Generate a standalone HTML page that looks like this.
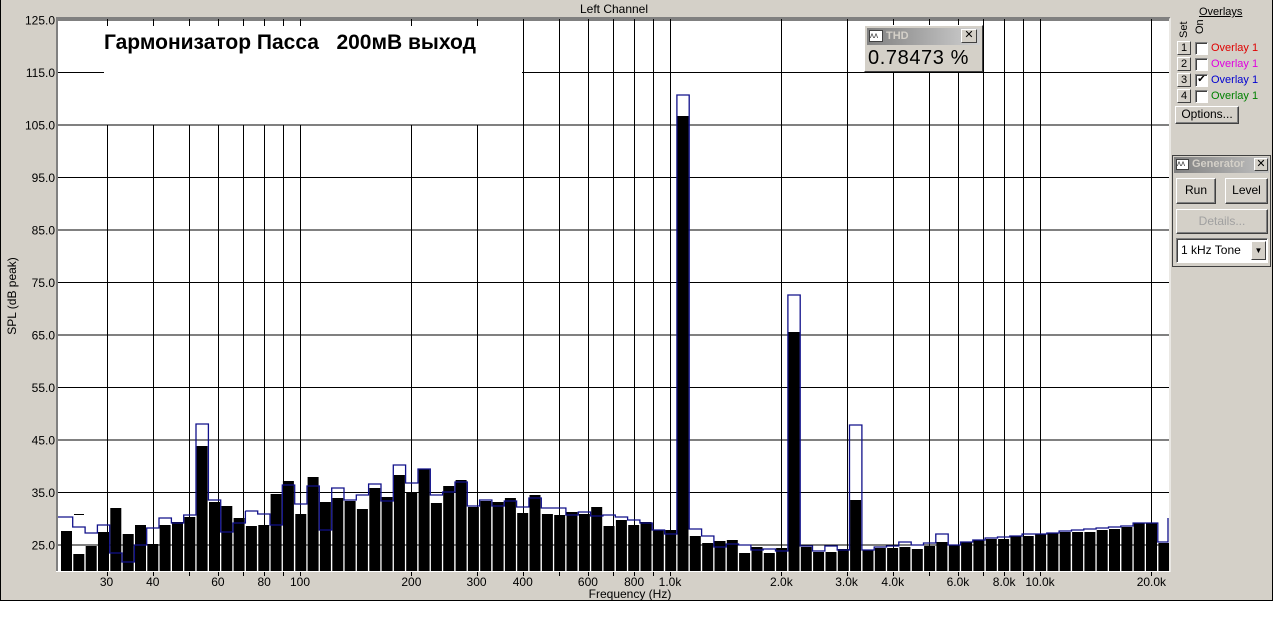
<!DOCTYPE html>
<html><head><meta charset="utf-8">
<style>
*{margin:0;padding:0;box-sizing:border-box}
body{width:1274px;height:637px;background:#fff;position:relative;overflow:hidden;font-family:"Liberation Sans","DejaVu Sans",sans-serif;font-size:11px;color:#000}
#win{position:absolute;left:0;top:0;width:1273px;height:601px;background:#d4d0c8;border-left:1px solid #000;border-bottom:1px solid #000;border-right:1px solid #000}
.abs{position:absolute}
.btn{position:absolute;background:#d4d0c8;border:1px solid;border-color:#fff #404040 #404040 #fff;box-shadow:inset -1px -1px 0 #808080;text-align:center;font-size:12px}
.num{position:absolute;width:14px;height:14px;background:#d4d0c8;border:1px solid;border-color:#fff #404040 #404040 #fff;font-size:11px;text-align:center;line-height:12px}
.cb{position:absolute;width:13px;height:13px;background:#fff;border:1px solid;border-color:#808080 #fff #fff #808080;box-shadow:inset 1px 1px 0 #404040}
.ov{position:absolute;font-size:11px}
</style></head><body>
<div id="win">
<svg id="chart" class="abs" style="left:-1px;top:0" width="1274" height="601" xmlns="http://www.w3.org/2000/svg"></svg>

<div class="abs" style="left:1198px;top:6px;font-size:11px;text-decoration:underline">Overlays</div>
<div class="abs" style="left:1177px;top:38px;transform:rotate(-90deg);transform-origin:left top;font-size:11px">Set</div>
<div class="abs" style="left:1193px;top:34px;transform:rotate(-90deg);transform-origin:left top;font-size:11px">On</div>

<div class="num" style="left:1176px;top:41px">1</div><div class="cb" style="left:1194px;top:42px"></div><div class="ov" style="left:1210px;top:42px;color:#e00000">Overlay 1</div>
<div class="num" style="left:1176px;top:57px">2</div><div class="cb" style="left:1194px;top:58px"></div><div class="ov" style="left:1210px;top:58px;color:#e000e0">Overlay 1</div>
<div class="num" style="left:1176px;top:73px">3</div><div class="cb" style="left:1194px;top:74px;font-size:10px;line-height:10px;text-align:center">✔</div><div class="ov" style="left:1210px;top:74px;color:#0000d0">Overlay 1</div>
<div class="num" style="left:1176px;top:89px">4</div><div class="cb" style="left:1194px;top:90px"></div><div class="ov" style="left:1210px;top:90px;color:#008000">Overlay 1</div>
<div class="btn" style="left:1174px;top:106px;width:64px;height:18px;line-height:15px">Options...</div>

<div class="abs" style="left:1171px;top:155px;width:99px;height:112px;border:1px solid #404040;background:#d4d0c8">
 <div class="abs" style="left:1px;top:1px;width:95px;height:16px;background:linear-gradient(90deg,#808080,#c0c0c0)"></div>
 <div class="abs" style="left:3px;top:3px;width:13px;height:11px;background:#fff;border:1px solid #404040;font-size:8px;line-height:8px;color:#333">ᴧᴧ</div>
 <div class="abs" style="left:19px;top:2px;color:#d4d0c8;font-weight:bold;font-size:11px">Generator</div>
 <div class="abs" style="left:81px;top:2px;width:14px;height:13px;background:#d4d0c8;border:1px solid;border-color:#fff #404040 #404040 #fff;font-size:11px;line-height:10px;text-align:center;font-weight:bold">✕</div>
 <div class="btn" style="left:3px;top:22px;width:40px;height:26px;line-height:23px">Run</div>
 <div class="btn" style="left:52px;top:22px;width:43px;height:26px;line-height:23px">Level</div>
 <div class="btn" style="left:3px;top:53px;width:92px;height:25px;line-height:22px;color:#a0a0a0">Details...</div>
 <div class="abs" style="left:3px;top:82px;width:92px;height:25px;background:#fff;border:1px solid;border-color:#808080 #fff #fff #808080;box-shadow:inset 1px 1px 0 #404040;font-size:12px;line-height:22px;padding-left:4px">1 kHz Tone</div>
 <div class="abs" style="left:78px;top:85px;width:15px;height:19px;background:#d4d0c8;border:1px solid;border-color:#fff #404040 #404040 #fff;font-size:8px;line-height:17px;text-align:center">▼</div>
</div>

<div class="abs" style="left:863px;top:25px;width:119px;height:47px;border:1px solid;border-color:#fff #404040 #404040 #fff;background:#d4d0c8">
 <div class="abs" style="left:2px;top:2px;width:113px;height:17px;background:linear-gradient(90deg,#808080,#d0d0d0)"></div>
 <div class="abs" style="left:4px;top:4px;width:14px;height:12px;background:#fff;border:1px solid #404040;font-size:8px;line-height:9px;color:#333">ᴧᴧ</div>
 <div class="abs" style="left:21px;top:4px;color:#d4d0c8;font-weight:bold;font-size:11px">THD</div>
 <div class="abs" style="left:96px;top:3px;width:16px;height:14px;background:#d4d0c8;border:1px solid;border-color:#fff #404040 #404040 #fff;font-size:11px;line-height:11px;text-align:center;font-weight:bold">✕</div>
 <div class="abs" style="left:3px;top:21px;font-size:20px;letter-spacing:0.6px">0.78473 %</div>
</div>
</div>

<script>
(function(){
var s=document.getElementById('chart'),h='';
var L=58,R=1169,T=19,B=571;
var F='font-family="Liberation Sans,sans-serif"';
function fx(f){return 300+370*Math.log10(f/100);}
function dy(d){return 545-(d-25)*5.25;}
h+='<rect x="'+L+'" y="'+T+'" width="'+(R-L)+'" height="'+(B-T)+'" fill="#fff"/>';
for(var d=25;d<=125;d+=10){var y=dy(d);h+='<line x1="'+L+'" x2="'+R+'" y1="'+y+'" y2="'+y+'" stroke="#000" stroke-width="1"/>';
 h+='<text x="55" y="'+(y+4.5)+'" text-anchor="end" font-size="12" '+F+'>'+d.toFixed(1)+'</text>';}
var fs=[30,40,50,60,70,80,90,100,200,300,400,500,600,700,800,900,1000,2000,3000,4000,5000,6000,7000,8000,9000,10000,20000];
fs.forEach(function(f){var x=Math.round(fx(f))+0.5;h+='<line x1="'+x+'" x2="'+x+'" y1="'+T+'" y2="'+(B+5)+'" stroke="#000" stroke-width="1"/>';});
var lb=[[30,'30'],[40,'40'],[60,'60'],[80,'80'],[100,'100'],[200,'200'],[300,'300'],[400,'400'],[600,'600'],[800,'800'],[1000,'1.0k'],[2000,'2.0k'],[3000,'3.0k'],[4000,'4.0k'],[6000,'6.0k'],[8000,'8.0k'],[10000,'10.0k'],[20000,'20.0k']];
lb.forEach(function(a){h+='<text x="'+fx(a[0])+'" y="586" text-anchor="middle" font-size="12" '+F+'>'+a[1]+'</text>';});
h+='<rect x="104" y="21" width="418" height="103.5" fill="#fff"/>';
fs.forEach(function(f){var x=Math.round(fx(f))+0.5;if(x>104&&x<522)h+='<line x1="'+x+'" x2="'+x+'" y1="19" y2="26" stroke="#000"/>';});
h+='<text x="104" y="49" font-size="21" font-weight="bold" '+F+' xml:space="preserve">Гармонизатор Пасса   200мВ выход</text>';
var bk=[531,554,546,532,508,534,525,544,525,522,517,446,502,506,518,526,525,494,481,514,477,502,498,501,509,488,497,475,492,469,503,486,480,507,501,502,498,513,495,514,515,512,514,507,526,520,525,522,530,530,116,536,543,541,540,553,547,553,548,332,547,552,552,549,500,550,548,548,547,549,546,542,545,542,540,539,539,536,536,534,533,532,532,532,530,529,527,523,523,543];
var bl=[517,527,533,525,553,562,545,528,518,523,515,424,500,532,523,511,514,525,485,504,486,530,488,500,495,484,501,465,483,469,495,492,482,506,500,506,501,507,498,508,508,515,512,516,515,517,520,523,530,534,95,529,536,547,544,545,550,549,551,295,546,551,546,550,425,550,547,546,542,545,543,534,545,542,540,538,537,536,534,534,533,531,530,529,528,527,526,523,523,542];
var P=12.33,x0=61,path='M58,'+bl[0];
for(var i=0;i<bk.length;i++){var x=x0+i*P,w=Math.min(11,R-x);
 h+='<rect x="'+x.toFixed(1)+'" y="'+bk[i]+'" width="'+w.toFixed(1)+'" height="'+(B-bk[i])+'" fill="#000"/>';
 var xe=(i==bk.length-1)?1168:(x+P-0.6);
 path+=' L'+(i==0?58:(x-0.6).toFixed(1))+','+bl[i]+' L'+xe.toFixed(1)+','+bl[i];
 if(i<bk.length-1)path+=' L'+xe.toFixed(1)+','+bl[i+1];}
path+=' L1168,518';
h+='<path d="'+path+'" fill="none" stroke="#10108a" stroke-width="1.3"/>';
h+='<line x1="74" x2="84" y1="514.5" y2="514.5" stroke="#000"/>';
h+='<line x1="57" x2="57" y1="17" y2="572" stroke="#808080" stroke-width="2"/>';
h+='<line x1="56" x2="1170" y1="18" y2="18" stroke="#808080" stroke-width="2"/>';
h+='<line x1="1170" x2="1170" y1="18" y2="572" stroke="#fff" stroke-width="1"/>';
h+='<line x1="56" x2="1170" y1="571.5" y2="571.5" stroke="#fff" stroke-width="1"/>';
h+='<text x="614" y="13" text-anchor="middle" font-size="12" '+F+'>Left Channel</text>';
h+='<text x="630" y="598" text-anchor="middle" font-size="12" '+F+'>Frequency (Hz)</text>';
h+='<text transform="translate(16,296) rotate(-90)" text-anchor="middle" font-size="12" '+F+'>SPL (dB peak)</text>';
s.innerHTML=h;
})();
</script>
</body></html>
